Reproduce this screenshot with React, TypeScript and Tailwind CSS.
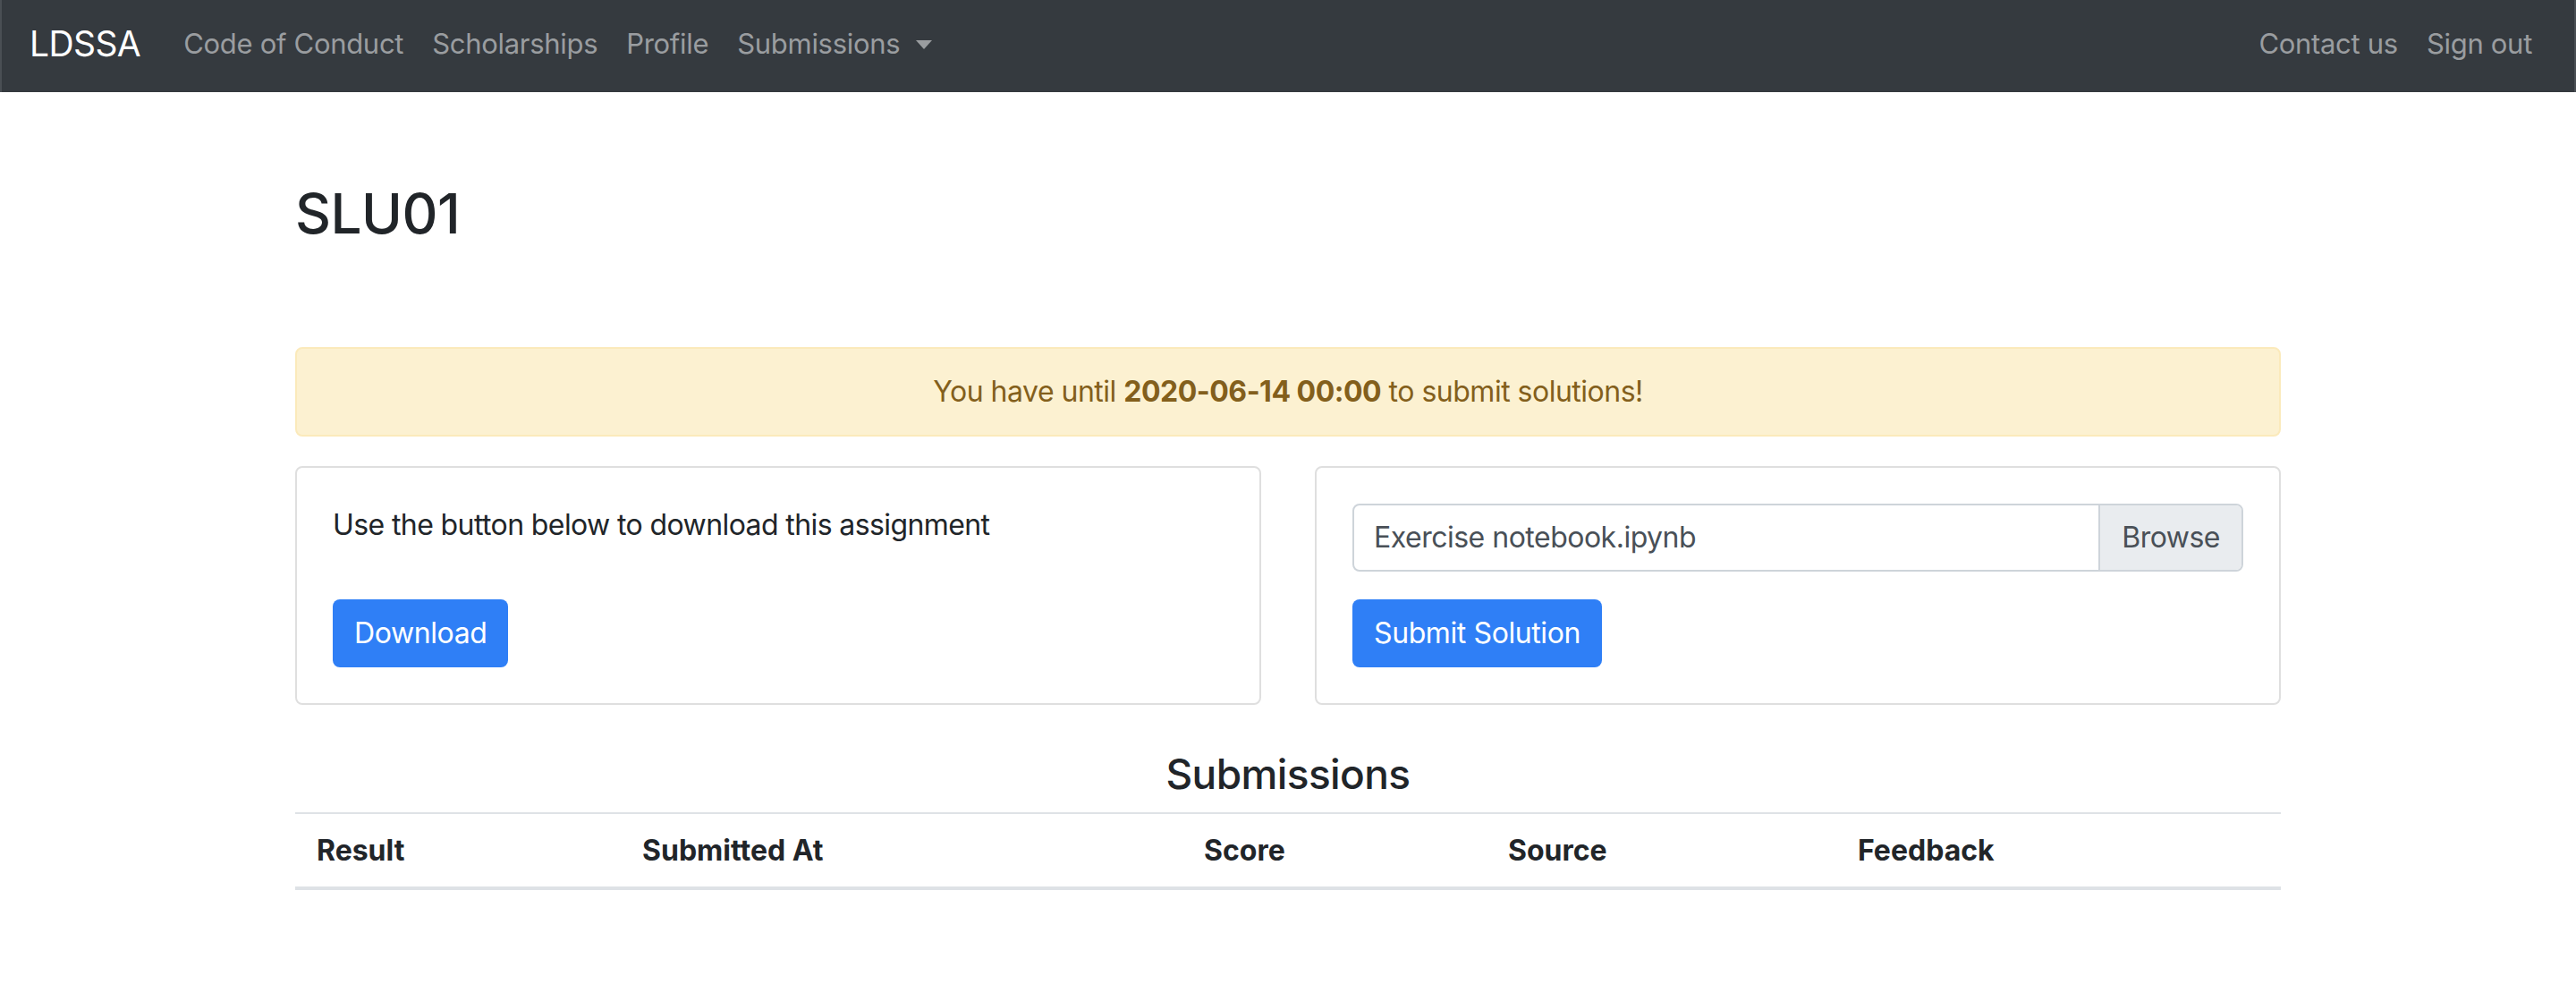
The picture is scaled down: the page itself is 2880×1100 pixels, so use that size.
import React from "react";

const font = { fontFamily: "Inter, 'Liberation Sans', sans-serif" };

// Top navigation bar - dark, brand on the left, account links on the right
function NavBar() {
  const links = ["Code of Conduct", "Scholarships", "Profile"];
  return (
    <nav className="h-[103px] bg-[#353a3f] border-l-2 border-r-2 border-[#4a4f54] flex items-center justify-between px-[31px] pb-[6px]">
      <div className="flex items-center">
        <span className="text-[39px] leading-[60px] tracking-[-0.6px] text-white mr-[32px]">LDSSA</span>
        {links.map((l) => (
          <span key={l} className="text-[31px] leading-[48px] tracking-[-0.3px] text-[#9a9da0] px-[16px]">
            {l}
          </span>
        ))}
        <span className="text-[31px] leading-[48px] tracking-[-0.3px] text-[#9a9da0] px-[16px] flex items-center">
          Submissions
          {/* dropdown caret */}
          <span className="ml-[18px] mt-[2px] w-0 h-0 border-l-[9px] border-r-[9px] border-t-[10px] border-l-transparent border-r-transparent border-t-[#9a9da0]"></span>
        </span>
      </div>
      <div className="flex items-center">
        <span className="text-[31px] leading-[48px] tracking-[-0.3px] text-[#9a9da0] px-[16px]">Contact us</span>
        <span className="text-[31px] leading-[48px] tracking-[-0.3px] text-[#9a9da0] px-[16px]">Sign out</span>
      </div>
    </nav>
  );
}

function Card({ children }: { children: React.ReactNode }) {
  return (
    <div className="border-2 border-[#dfdfdf] rounded-[8px] p-[40px] bg-white">{children}</div>
  );
}

export default function App() {
  const columns = [
    { label: "Result", w: "w-[364px]" },
    { label: "Submitted At", w: "w-[628px]" },
    { label: "Score", w: "w-[340px]" },
    { label: "Source", w: "w-[391px]" },
    { label: "Feedback", w: "flex-1" },
  ];

  return (
    <div className="min-h-[1100px] bg-white text-[#212529]" style={font}>
      <NavBar />

      <main className="w-[2220px] mx-auto">
        {/* Assignment title */}
        <h1 className="mt-[97px] text-[62px] leading-[77px] tracking-[-0.5px] font-medium text-[#212529]">SLU01</h1>

        {/* Deadline alert */}
        <div className="mt-[111px] mb-[33px] bg-[#fcf1d1] border-2 border-[#fbeabb] rounded-[8px] py-[24px] px-[40px] text-center text-[32px] leading-[48px] tracking-[-0.5px] text-[#835f1c]">
          You have until <b className="font-bold">2020-06-14 00:00</b> to submit solutions!
        </div>

        <div className="grid grid-cols-2 gap-[60px]">
          <Card>
            <p className="text-[32px] leading-[48px] tracking-[-0.6px]">Use the button below to download this assignment</p>
            <button className="mt-[59px] h-[76px] px-[24px] rounded-[8px] bg-[#2f7ff6] text-white text-[32px] leading-[48px] tracking-[-0.4px]">
              Download
            </button>
          </Card>
          <Card>
            <div className="flex h-[76px] border-2 border-[#ced4da] rounded-[8px] overflow-hidden">
              <div className="flex-1 flex items-center px-[22px] text-[32px] tracking-[-0.5px] text-[#495057]">
                Exercise notebook.ipynb
              </div>
              <div className="flex items-center px-[24px] bg-[#e9ecef] border-l-2 border-[#ced4da] text-[32px] tracking-[-0.5px] text-[#495057]">
                Browse
              </div>
            </div>
            <button className="mt-[31px] h-[76px] px-[24px] rounded-[8px] bg-[#2f7ff6] text-white text-[32px] leading-[48px] tracking-[-0.4px]">
              Submit Solution
            </button>
          </Card>
        </div>

        {/* Submissions table */}
        <h4 className="mt-[48px] text-center text-[46px] leading-[58px] tracking-[-0.6px] font-medium">Submissions</h4>
        <div className="mt-[14px] border-t-2 border-b-4 border-[#dee2e6] h-[87px] flex items-center">
          {columns.map((c) => (
            <div key={c.label} className={`${c.w} px-[24px] text-[32px] leading-[48px] font-bold`}>
              {c.label}
            </div>
          ))}
        </div>
      </main>
    </div>
  );
}
